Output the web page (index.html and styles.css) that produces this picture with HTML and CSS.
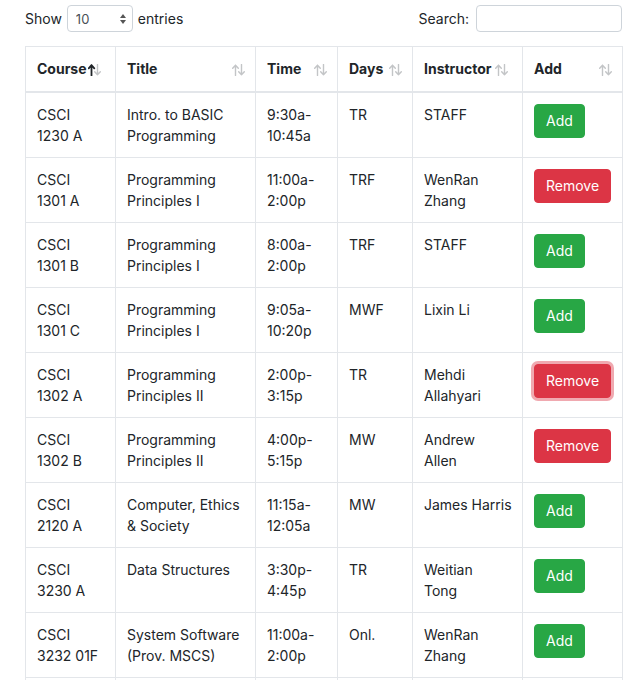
FILE: index.html
```html
<!DOCTYPE html>
<html>
<head>
<meta charset="utf-8">
<link rel="stylesheet" href="styles.css">
</head>
<body>
<div class="wrap">
  <div class="controls">
    <label class="length">Show
      <span class="select-wrap">
        <select class="select"><option>10</option><option>25</option></select>
        <svg class="caret" width="8" height="12" viewBox="0 0 8 12"><path d="M4 1 L7 5 H1 Z" fill="#555"/><path d="M4 11 L7 7 H1 Z" fill="#555"/></svg>
      </span>
      entries</label>
    <label class="search">Search: <input class="search-input" type="text"></label>
  </div>
  <table class="tbl">
    <colgroup>
      <col class="w-course"><col class="w-title"><col class="w-time"><col class="w-days"><col class="w-instr"><col class="w-add">
    </colgroup>
    <thead>
      <tr>
        <th class="tight">Course<svg class="sort" width="13" height="12" viewBox="0 0 13 12"><path class="on" d="M3.5 11.5 V1.2 M0.7 4.3 L3.5 1.2 L6.3 4.3"/><path class="off" d="M9.5 0.5 V10.8 M6.7 7.7 L9.5 10.8 L12.3 7.7"/></svg></th>
        <th>Title<svg class="sort" width="13" height="12" viewBox="0 0 13 12"><path class="off" d="M3.5 11.5 V1.2 M0.7 4.3 L3.5 1.2 L6.3 4.3"/><path class="off" d="M9.5 0.5 V10.8 M6.7 7.7 L9.5 10.8 L12.3 7.7"/></svg></th>
        <th>Time<svg class="sort" width="13" height="12" viewBox="0 0 13 12"><path class="off" d="M3.5 11.5 V1.2 M0.7 4.3 L3.5 1.2 L6.3 4.3"/><path class="off" d="M9.5 0.5 V10.8 M6.7 7.7 L9.5 10.8 L12.3 7.7"/></svg></th>
        <th>Days<svg class="sort" width="13" height="12" viewBox="0 0 13 12"><path class="off" d="M3.5 11.5 V1.2 M0.7 4.3 L3.5 1.2 L6.3 4.3"/><path class="off" d="M9.5 0.5 V10.8 M6.7 7.7 L9.5 10.8 L12.3 7.7"/></svg></th>
        <th class="tight">Instructor<svg class="sort" width="13" height="12" viewBox="0 0 13 12"><path class="off" d="M3.5 11.5 V1.2 M0.7 4.3 L3.5 1.2 L6.3 4.3"/><path class="off" d="M9.5 0.5 V10.8 M6.7 7.7 L9.5 10.8 L12.3 7.7"/></svg></th>
        <th>Add<svg class="sort" width="13" height="12" viewBox="0 0 13 12"><path class="off" d="M3.5 11.5 V1.2 M0.7 4.3 L3.5 1.2 L6.3 4.3"/><path class="off" d="M9.5 0.5 V10.8 M6.7 7.7 L9.5 10.8 L12.3 7.7"/></svg></th>
      </tr>
    </thead>
    <tbody>
      <tr><td>CSCI<br>1230 A</td><td>Intro. to BASIC<br>Programming</td><td>9:30a-<br>10:45a</td><td>TR</td><td>STAFF</td><td><button class="btn add">Add</button></td></tr>
      <tr><td>CSCI<br>1301 A</td><td>Programming<br>Principles I</td><td>11:00a-<br>2:00p</td><td>TRF</td><td>WenRan<br>Zhang</td><td><button class="btn remove">Remove</button></td></tr>
      <tr><td>CSCI<br>1301 B</td><td>Programming<br>Principles I</td><td>8:00a-<br>2:00p</td><td>TRF</td><td>STAFF</td><td><button class="btn add">Add</button></td></tr>
      <tr><td>CSCI<br>1301 C</td><td>Programming<br>Principles I</td><td>9:05a-<br>10:20p</td><td>MWF</td><td>Lixin Li</td><td><button class="btn add">Add</button></td></tr>
      <tr><td>CSCI<br>1302 A</td><td>Programming<br>Principles II</td><td>2:00p-<br>3:15p</td><td>TR</td><td>Mehdi<br>Allahyari</td><td><button class="btn remove focus">Remove</button></td></tr>
      <tr><td>CSCI<br>1302 B</td><td>Programming<br>Principles II</td><td>4:00p-<br>5:15p</td><td>MW</td><td>Andrew<br>Allen</td><td><button class="btn remove">Remove</button></td></tr>
      <tr><td>CSCI<br>2120 A</td><td>Computer, Ethics<br>&amp; Society</td><td>11:15a-<br>12:05a</td><td>MW</td><td>James Harris</td><td><button class="btn add">Add</button></td></tr>
      <tr><td>CSCI<br>3230 A</td><td>Data Structures</td><td>3:30p-<br>4:45p</td><td>TR</td><td>Weitian<br>Tong</td><td><button class="btn add">Add</button></td></tr>
      <tr><td>CSCI<br>3232 01F</td><td>System Software<br>(Prov. MSCS)</td><td>11:00a-<br>2:00p</td><td>Onl.</td><td>WenRan<br>Zhang</td><td><button class="btn add">Add</button></td></tr>
      <tr><td>CSCI<br>4000 A</td><td>Senior Seminar</td><td>1:00p-<br>2:00p</td><td>F</td><td>STAFF</td><td><button class="btn add">Add</button></td></tr>
    </tbody>
  </table>
</div>
</body>
</html>
```

FILE: styles.css
```css
html, body {
  margin: 0;
  padding: 0;
  background: #fff;
}
body {
  font-family: Inter, "Noto Sans", "Liberation Sans", sans-serif;
  font-size: 14px;
  line-height: 21px;
  color: #212529;
}
.wrap {
  padding: 5px 16px 0 25px;
  width: 597px;
}
.controls {
  display: flex;
  justify-content: space-between;
  align-items: center;
  height: 27px;
}
.length, .search {
  display: flex;
  align-items: center;
  gap: 5px;
  font-weight: 400;
}
.select-wrap {
  position: relative;
  display: inline-block;
}
.select {
  -webkit-appearance: none;
  appearance: none;
  width: 66px;
  height: 27px;
  box-sizing: border-box;
  border: 1px solid #ced4da;
  border-radius: 4px;
  background: #fff;
  font-family: inherit;
  font-size: 13px;
  color: #495057;
  padding: 0 8px;
  display: block;
}
.caret {
  position: absolute;
  right: 6px;
  top: 8px;
  pointer-events: none;
}
.search-input {
  width: 146px;
  height: 27px;
  box-sizing: border-box;
  border: 1px solid #ced4da;
  border-radius: 4px;
  margin: 0 0 0 2px;
  padding: 0 8px;
}
.tbl {
  margin-top: 14px;
  width: 597px;
  table-layout: fixed;
  border-collapse: collapse;
}
.w-course { width: 90px; }
.w-title { width: 140px; }
.w-time { width: 82px; }
.w-days { width: 75px; }
.w-instr { width: 110px; }
.w-add { width: 100px; }
.tbl th, .tbl td {
  border: 1px solid #e3e6ea;
  padding: 11px 11px;
  text-align: left;
  vertical-align: top;
  white-space: nowrap;
}
.tbl th {
  position: relative;
  font-weight: 700;
  font-size: 14px;
  border-bottom: 2px solid #e3e6ea;
  padding-bottom: 12px;
  padding-right: 24px;
}
.tbl td {
  height: 42px;
}
.sort {
  position: absolute;
  right: 10px;
  top: 17px;
  fill: none;
  stroke-width: 1.4;
  stroke-linecap: round;
  stroke-linejoin: round;
}
.tight .sort { right: 14px; }
.sort .off { stroke: #c3c5c7; }
.sort .on { stroke: #212529; stroke-width: 1.8; }
.btn {
  font-family: inherit;
  font-size: 14px;
  line-height: 20px;
  padding: 6px 11px;
  border: 1px solid transparent;
  border-radius: 4px;
  color: #fff;
  cursor: pointer;
}
.add { background: #28a745; border-color: #28a745; }
.remove { background: #dc3545; border-color: #dc3545; }
.remove.focus { box-shadow: 0 0 0 3px rgba(225, 83, 97, 0.5); }
```
